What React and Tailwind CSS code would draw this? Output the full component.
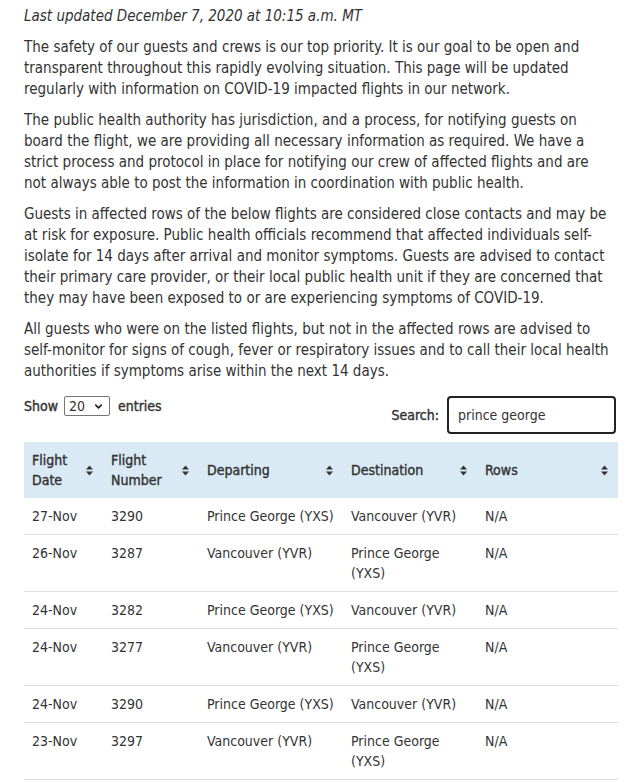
import { ChevronDown } from "lucide-react";

const flights = [
  { date: "27-Nov", num: "3290", from: "Prince George (YXS)", to: "Vancouver (YVR)", rows: "N/A" },
  { date: "26-Nov", num: "3287", from: "Vancouver (YVR)", to: "Prince George (YXS)", rows: "N/A" },
  { date: "24-Nov", num: "3282", from: "Prince George (YXS)", to: "Vancouver (YVR)", rows: "N/A" },
  { date: "24-Nov", num: "3277", from: "Vancouver (YVR)", to: "Prince George (YXS)", rows: "N/A" },
  { date: "24-Nov", num: "3290", from: "Prince George (YXS)", to: "Vancouver (YVR)", rows: "N/A" },
  { date: "23-Nov", num: "3297", from: "Vancouver (YVR)", to: "Prince George (YXS)", rows: "N/A" },
];

const columns = [
  { label: "Flight Date", width: "w-[79px]" },
  { label: "Flight Number", width: "w-[96px]" },
  { label: "Departing", width: "w-[144px]" },
  { label: "Destination", width: "w-[134px]" },
  { label: "Rows", width: "w-[141px]" },
];

// medium-weight look: DejaVu has no 500, so thicken the regular face a touch
const medium = "font-normal [-webkit-text-stroke:0.4px_#333]";

function SortIcon() {
  return (
    <svg width="7" height="11" viewBox="0 0 7 11" className="shrink-0 fill-[#333]">
      <polygon points="0,4.5 3.5,0.5 7,4.5" />
      <polygon points="0,6.5 7,6.5 3.5,10.5" />
    </svg>
  );
}

export default function App() {
  return (
    <div
      className="pl-6 pr-[15px] pt-[6px] text-[15px] leading-[21px] text-[#333] bg-white"
      style={{ fontFamily: '"DejaVu Sans Condensed", "DejaVu Sans", sans-serif' }}
    >
      <p className="italic mb-[10px]">Last updated December 7, 2020 at 10:15 a.m. MT</p>
      <p className="mb-[10px]">
        The safety of our guests and crews is our top priority. It is our goal to be open and<br />
        transparent throughout this rapidly evolving situation. This page will be updated<br />
        regularly with information on COVID-19 impacted flights in our network.
      </p>
      <p className="mb-[10px]">
        The public health authority has jurisdiction, and a process, for notifying guests on<br />
        board the flight, we are providing all necessary information as required. We have a<br />
        strict process and protocol in place for notifying our crew of affected flights and are<br />
        not always able to post the information in coordination with public health.
      </p>
      <p className="mb-[10px]">
        Guests in affected rows of the below flights are considered close contacts and may be<br />
        at risk for exposure. Public health officials recommend that affected individuals self-<br />
        isolate for 14 days after arrival and monitor symptoms. Guests are advised to contact<br />
        their primary care provider, or their local public health unit if they are concerned that<br />
        they may have been exposed to or are experiencing symptoms of COVID-19.
      </p>
      <p>
        All guests who were on the listed flights, but not in the affected rows are advised to<br />
        self-monitor for signs of cough, fever or respiratory issues and to call their local health<br />
        authorities if symptoms arise within the next 14 days.
      </p>

      <div className="mt-[14px] flex items-start justify-between text-[14px]">
        <div className={`flex items-center gap-[6px] h-[20px] ${medium}`}>
          <span>Show</span>
          <div className="relative [-webkit-text-stroke:0]">
            <select
              defaultValue="20"
              className="appearance-none w-[46px] h-[20px] border border-[#767676] rounded-[2px] pl-[4px] text-[14px] leading-[18px] bg-white text-[#333]"
            >
              <option>10</option>
              <option>20</option>
              <option>50</option>
              <option>100</option>
            </select>
            <ChevronDown
              size={11}
              strokeWidth={3.5}
              className="absolute right-[6px] top-[5px] pointer-events-none text-[#222]"
            />
          </div>
          <span className="ml-[2px]">entries</span>
        </div>
        <label className="flex items-center gap-[8px] mr-[2px]">
          <span className={medium}>Search:</span>
          <input
            defaultValue="prince george"
            className="w-[169px] h-[38px] border-2 border-[#222] rounded-[4px] px-[9px] text-[#333] outline-none"
          />
        </label>
      </div>

      <table className="mt-[8px] w-full table-fixed border-collapse text-[14px] leading-[20px]">
        <thead>
          <tr className="bg-[#d9eaf5]">
            {columns.map((c) => (
              <th key={c.label} className={`${c.width} py-2 pl-2 pr-[10px] text-left align-middle ${medium}`}>
                <div className="flex items-center justify-between gap-2">
                  <span>{c.label}</span>
                  <SortIcon />
                </div>
              </th>
            ))}
          </tr>
        </thead>
        <tbody>
          {flights.map((f, i) => (
            <tr key={i} className="border-b border-[#dedede] align-top">
              <td className="py-2 pl-2 pr-2">{f.date}</td>
              <td className="py-2 pl-2 pr-2">{f.num}</td>
              <td className="py-2 pl-2 pr-0">{f.from}</td>
              <td className="py-2 pl-2 pr-4">{f.to}</td>
              <td className="py-2 pl-2 pr-2">{f.rows}</td>
            </tr>
          ))}
        </tbody>
      </table>
    </div>
  );
}
